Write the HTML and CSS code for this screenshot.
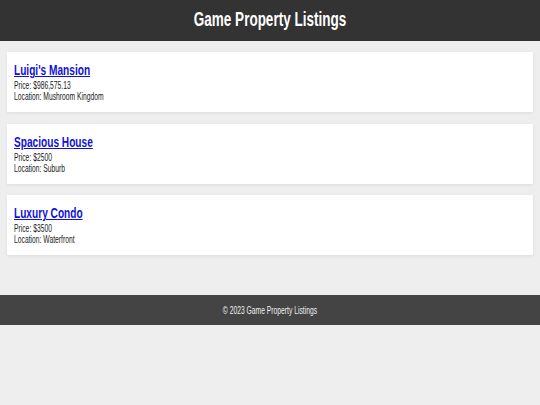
FILE: index.html
```html
<!DOCTYPE html>
<html lang="en">
<head>
    <meta charset="UTF-8">
    <meta name="viewport" content="width=device-width, initial-scale=1.0">
    <title>Game Property Listings</title>
    <link rel="stylesheet" href="styles.css">
</head>
<body>
    <header class="site-header">
        <h1 class="narrow">Game Property Listings</h1>
    </header>
    <main class="listings">
        <div class="listing">
            <h2 class="narrow"><a href="#">Luigi's Mansion</a></h2>
            <p class="narrow">Price: $986,575.13</p>
            <p class="narrow">Location: Mushroom Kingdom</p>
        </div>
        <div class="listing">
            <h2 class="narrow"><a href="#">Spacious House</a></h2>
            <p class="narrow">Price: $2500</p>
            <p class="narrow">Location: Suburb</p>
        </div>
        <div class="listing">
            <h2 class="narrow"><a href="#">Luxury Condo</a></h2>
            <p class="narrow">Price: $3500</p>
            <p class="narrow">Location: Waterfront</p>
        </div>
    </main>
    <footer class="site-footer">
        <p class="narrow">&copy; 2023 Game Property Listings</p>
    </footer>
</body>
</html>
```

FILE: styles.css
```css
body {
    margin: 0;
    background-color: #eeeeee;
    font-family: "Liberation Sans", Arial, sans-serif;
}
/* squeezed text, the way the listings page is drawn */
.narrow {
    transform: scaleX(0.675);
    transform-origin: left center;
}
.site-header {
    background-color: #333333;
    color: white;
    text-align: center;
    padding: 8px 0 10px;
}
.site-header h1 {
    margin: 0;
    font-size: 20px;
    line-height: 23px;
    transform-origin: center;
}
.listings {
    display: flex;
    flex-direction: column;
    gap: 11.6px;
    padding: 11px 7px 0;
}
.listing {
    background-color: white;
    height: 60px;
    box-sizing: border-box;
    padding: 9px 7px 10px;
    box-shadow: 0 1px 3px rgba(0, 0, 0, 0.08);
}
.listing h2 {
    margin: 0 0 2px;
    font-size: 15px;
    line-height: 17px;
}
.listing h2 a {
    color: #1010d8;
}
.listing p {
    margin: 0;
    font-size: 10px;
    line-height: 11px;
    color: #222222;
}
.site-footer {
    margin-top: 40px;
    background-color: #444444;
    color: #eeeeee;
    text-align: center;
    padding: 9.5px 0;
}
.site-footer p {
    margin: 0;
    font-size: 10px;
    line-height: 11px;
    transform-origin: center;
}
```
